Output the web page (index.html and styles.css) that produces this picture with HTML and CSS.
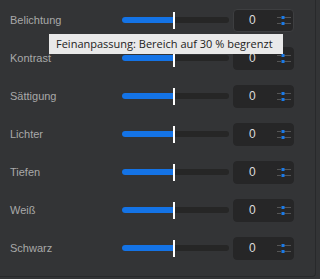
FILE: index.html
```html
<!DOCTYPE html>
<html>
<head>
<meta charset="utf-8">
<link rel="stylesheet" href="styles.css">
</head>
<body>
<div class="panel">
  <div class="row"><span class="label">Belichtung</span><div class="track"><div class="fill"></div><div class="thumb"></div></div><div class="num focused"><span class="val">0</span><svg class="ico" width="14" height="9" viewBox="0 0 14 9"><path d="M0 1.5h4M7 1.5h7M0 7.5h4M7 7.5h7" stroke="#555" stroke-width="1"/><rect x="4.5" y="0" width="3" height="3" fill="#1a7ae8"/><rect x="4.5" y="6" width="3" height="3" fill="#1a7ae8"/></svg></div></div>
  <div class="row"><span class="label">Kontrast</span><div class="track"><div class="fill"></div><div class="thumb"></div></div><div class="num"><span class="val">0</span><svg class="ico" width="14" height="9" viewBox="0 0 14 9"><path d="M0 1.5h4M7 1.5h7M0 7.5h4M7 7.5h7" stroke="#555" stroke-width="1"/><rect x="4.5" y="0" width="3" height="3" fill="#1a7ae8"/><rect x="4.5" y="6" width="3" height="3" fill="#1a7ae8"/></svg></div></div>
  <div class="row"><span class="label">Sättigung</span><div class="track"><div class="fill"></div><div class="thumb"></div></div><div class="num"><span class="val">0</span><svg class="ico" width="14" height="9" viewBox="0 0 14 9"><path d="M0 1.5h4M7 1.5h7M0 7.5h4M7 7.5h7" stroke="#555" stroke-width="1"/><rect x="4.5" y="0" width="3" height="3" fill="#1a7ae8"/><rect x="4.5" y="6" width="3" height="3" fill="#1a7ae8"/></svg></div></div>
  <div class="row"><span class="label">Lichter</span><div class="track"><div class="fill"></div><div class="thumb"></div></div><div class="num"><span class="val">0</span><svg class="ico" width="14" height="9" viewBox="0 0 14 9"><path d="M0 1.5h4M7 1.5h7M0 7.5h4M7 7.5h7" stroke="#555" stroke-width="1"/><rect x="4.5" y="0" width="3" height="3" fill="#1a7ae8"/><rect x="4.5" y="6" width="3" height="3" fill="#1a7ae8"/></svg></div></div>
  <div class="row"><span class="label">Tiefen</span><div class="track"><div class="fill"></div><div class="thumb"></div></div><div class="num"><span class="val">0</span><svg class="ico" width="14" height="9" viewBox="0 0 14 9"><path d="M0 1.5h4M7 1.5h7M0 7.5h4M7 7.5h7" stroke="#555" stroke-width="1"/><rect x="4.5" y="0" width="3" height="3" fill="#1a7ae8"/><rect x="4.5" y="6" width="3" height="3" fill="#1a7ae8"/></svg></div></div>
  <div class="row"><span class="label">Weiß</span><div class="track"><div class="fill"></div><div class="thumb"></div></div><div class="num"><span class="val">0</span><svg class="ico" width="14" height="9" viewBox="0 0 14 9"><path d="M0 1.5h4M7 1.5h7M0 7.5h4M7 7.5h7" stroke="#555" stroke-width="1"/><rect x="4.5" y="0" width="3" height="3" fill="#1a7ae8"/><rect x="4.5" y="6" width="3" height="3" fill="#1a7ae8"/></svg></div></div>
  <div class="row"><span class="label">Schwarz</span><div class="track"><div class="fill"></div><div class="thumb"></div></div><div class="num"><span class="val">0</span><svg class="ico" width="14" height="9" viewBox="0 0 14 9"><path d="M0 1.5h4M7 1.5h7M0 7.5h4M7 7.5h7" stroke="#555" stroke-width="1"/><rect x="4.5" y="0" width="3" height="3" fill="#1a7ae8"/><rect x="4.5" y="6" width="3" height="3" fill="#1a7ae8"/></svg></div></div>
  <div class="tooltip">Feinanpassung: Bereich auf 30 % begrenzt</div>
</div>
</body>
</html>
```
FILE: styles.css
```css
html, body {
  margin: 0;
  padding: 0;
  background: #333436;
  width: 320px;
  height: 279px;
  overflow: hidden;
}
.panel {
  position: relative;
  width: 316px;
  height: 277px;
  background: #333436;
  border-right: 1px solid #28292b;
  border-bottom: 1px solid #28292b;
  border-bottom-right-radius: 4px;
  padding-top: 1px;
  box-sizing: border-box;
  font-family: "Liberation Sans", Arial, sans-serif;
}
.row {
  display: grid;
  grid-template-columns: 108px 107px 61px;
  column-gap: 4px;
  align-items: center;
  height: 38px;
  padding-left: 10px;
}
.label {
  color: #a9a9a9;
  font-size: 11px;
}
.track {
  position: relative;
  height: 6px;
  border-radius: 3px;
  background: #262626;
}
.fill {
  width: 52px;
  height: 6px;
  border-radius: 3px 0 0 3px;
  background: #1473e6;
}
.thumb {
  position: absolute;
  left: 51px;
  top: -5px;
  width: 2px;
  height: 17px;
  background: #ffffff;
}
.num {
  display: flex;
  align-items: center;
  justify-content: space-between;
  height: 23px;
  box-sizing: border-box;
  background: #262627;
  border: 1px solid #262627;
  border-radius: 4px;
  padding: 0 2px 0 15px;
}
.num.focused {
  border-color: #3d3e40;
}
.val {
  color: #dcdcdc;
  font-size: 12px;
}
.ico {
  display: block;
}
.tooltip {
  position: absolute;
  left: 49px;
  top: 34px;
  width: 234px;
  height: 20px;
  box-sizing: border-box;
  background: #e9e9e9;
  color: #222;
  font-family: "Open Sans", "Noto Sans", sans-serif;
  font-size: 11px;
  line-height: 20px;
  padding-left: 7px;
  white-space: nowrap;
}
```
